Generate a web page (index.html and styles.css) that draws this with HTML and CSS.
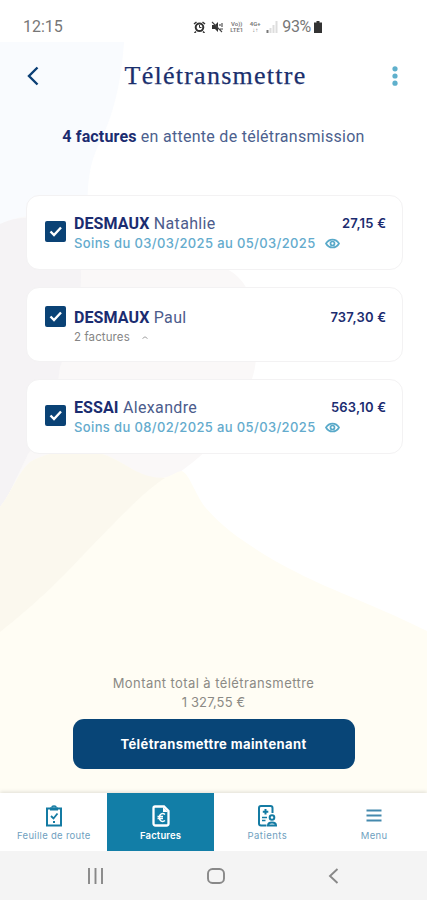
FILE: index.html
```
<!DOCTYPE html>
<html lang="fr">
<head>
  <meta charset="UTF-8" />
  <meta name="viewport" content="width=device-width, initial-scale=1.0"/>
  <title>Télétransmettre</title>
  <link rel="stylesheet" href="styles.css">
</head>
<body>
  <div class="screen">
    <svg class="backdrop" viewBox="0 0 427 751" preserveAspectRatio="none">
      <path d="M0 0H124C121 45 112 75 101 98C91 118 86 135 88 180L60 240H0Z" fill="#f9fbfe"/>
      <path d="M0 182C30 169 60 170 100 185L200 220C225 222 240 233 247 247C258 280 259 318 252 337C240 375 215 405 180 430L60 500H0Z" fill="#faf8f8"/>
      <path d="M0 182C30 169 60 175 80 215C85 260 70 300 60 325C55 365 45 390 28 412L0 470Z" fill="#f5f3f5"/>
      <path d="M0 751V465C12 450 18 430 30 420C50 407 90 405 110 415C130 424 140 436 160 436C170 436 174 430 182 429C190 433 194 450 205 465C225 488 245 500 265 513C320 546 365 558 427 589V751Z" fill="#fffdf4"/>
      <path d="M0 465C12 450 18 430 30 420C50 407 90 405 110 415C130 424 140 436 165 436C145 448 115 480 85 511C55 543 35 562 0 590Z" fill="#fbf8ee"/>
    </svg>

    <div class="status">
      <span class="time">12:15</span>
      <div class="status-icons">
        <svg width="13" height="12" viewBox="0 0 13 12">
          <path d="M1 3L3.500 1M12 3L9.500 1M3 10.500L1.500 12M10 10.500L11.500 12" stroke="#333" stroke-width="1.500"/>
          <circle cx="6.500" cy="6.300" r="3.800" fill="none" stroke="#333" stroke-width="2"/>
          <path d="M6.500 4V6.500H8.500" fill="none" stroke="#333"/>
        </svg>
        <svg width="13" height="12" viewBox="0 0 13 12">
          <path d="M1 4H4L7 1V11L4 8H1Z" fill="#333"/>
          <path d="M1 1L11 11M9 3V5M11 2V6M9 8H12" stroke="#444" stroke-width="1.100"/>
        </svg>
        <span class="net">Vo))<br>LTE1</span>
        <span class="net net-g">4G+<br>↓↑</span>
        <svg width="12" height="12" viewBox="0 0 12 12">
          <path d="M1.500 9V12" stroke="#777" stroke-width="2"/>
          <path d="M4.500 7V12M7.500 4V12M10.500 0V12" stroke="#ddd" stroke-width="2"/>
        </svg>
        <span class="percent">93%</span>
        <svg class="battery" width="8" height="12" viewBox="0 0 8 12">
          <path d="M2.500 0H5.500V1.500H8V12H0V1.500H2.500Z" fill="#333"/>
        </svg>
      </div>
    </div>

    <header class="header">
      <svg width="12" height="20" viewBox="0 0 12 20">
        <path d="M10.500 1.500L2 10L10.500 18.500" fill="none" stroke="#0b3f75" stroke-width="2.400"/>
      </svg>
      <h1>Télétransmettre</h1>
      <svg width="6" height="20" viewBox="0 0 6 20" fill="#5fb0cc">
        <circle cx="3" cy="2.800" r="2.600"/>
        <circle cx="3" cy="10" r="2.600"/>
        <circle cx="3" cy="17.200" r="2.600"/>
      </svg>
    </header>

    <p class="intro"><b>4 factures</b> en attente de télétransmission</p>

    <main class="list">
      <div class="card">
        <svg class="check" viewBox="0 0 21 21"><rect width="21" height="21" rx="2" fill="#0a4275"/><path d="M5.500 10.500L9 14L16 6.500" fill="none" stroke="#fff" stroke-width="2.400"/></svg>
        <div class="info">
          <div class="row"><span class="name"><b>DESMAUX</b> Natahlie</span><span class="price">27,15 €</span></div>
          <div class="care">Soins du 03/03/2025 au 05/03/2025
            <svg class="eye" viewBox="0 0 15 11"><path d="M1 5.500C4 .2 11 .2 14 5.500C11 10.800 4 10.800 1 5.500Z" fill="none" stroke="#58a9c9" stroke-width="1.700"/><circle cx="7.500" cy="5.500" r="2" fill="none" stroke="#58a9c9" stroke-width="1.700"/></svg>
          </div>
        </div>
      </div>

      <div class="card card-group">
        <svg class="check" viewBox="0 0 21 21"><rect width="21" height="21" rx="2" fill="#0a4275"/><path d="M5.500 10.500L9 14L16 6.500" fill="none" stroke="#fff" stroke-width="2.400"/></svg>
        <div class="info">
          <div class="row"><span class="name"><b>DESMAUX</b> Paul</span><span class="price">737,30 €</span></div>
          <div class="count">2 factures
            <svg width="6" height="3" viewBox="0 0 6 3"><path d="M.5 2.500L3 .8L5.500 2.500" fill="none" stroke="#999" stroke-width=".9"/></svg>
          </div>
        </div>
      </div>

      <div class="card">
        <svg class="check" viewBox="0 0 21 21"><rect width="21" height="21" rx="2" fill="#0a4275"/><path d="M5.500 10.500L9 14L16 6.500" fill="none" stroke="#fff" stroke-width="2.400"/></svg>
        <div class="info">
          <div class="row"><span class="name"><b>ESSAI</b> Alexandre</span><span class="price">563,10 €</span></div>
          <div class="care">Soins du 08/02/2025 au 05/03/2025
            <svg class="eye" viewBox="0 0 15 11"><path d="M1 5.500C4 .2 11 .2 14 5.500C11 10.800 4 10.800 1 5.500Z" fill="none" stroke="#58a9c9" stroke-width="1.700"/><circle cx="7.500" cy="5.500" r="2" fill="none" stroke="#58a9c9" stroke-width="1.700"/></svg>
          </div>
        </div>
      </div>
    </main>

    <div class="total">
      <p>Montant total à télétransmettre</p>
      <p class="amount">1 327,55 €</p>
      <button>Télétransmettre maintenant</button>
    </div>

    <nav class="tabs">
      <a class="tab">
        <svg width="18" height="22" viewBox="0 0 18 22" fill="none" stroke="#147ba3" stroke-width="2">
          <path d="M2 3.500H16V20.500H2Z"/>
          <path d="M5 2.500H13V5.500H5Z" fill="#147ba3" stroke="none"/>
          <path d="M7 2.500C7 .5 11 .5 11 2.500" stroke-width="1.500"/>
          <path d="M6 11L8.500 13.500L12.500 8.500" stroke-width="1.800"/>
          <path d="M8 17H10"/>
        </svg>
        <span>Feuille de route</span>
      </a>
      <a class="tab active">
        <svg width="18" height="22" viewBox="0 0 18 22" fill="none" stroke="#fff" stroke-width="2.300">
          <path d="M3 1.500H12L16.500 6V18.500Q16.500 20.500 14.500 20.500H3.500Q1.500 20.500 1.500 18.500V3Q1.500 1.500 3 1.500Z"/>
          <path d="M11 2V7H16Z" fill="#fff" stroke="none"/>
          <path d="M13 9.500C10.500 7.500 7.500 9 7.300 12.500C7.300 16 10.500 17.500 13 15.500M5.500 11.500H11M5.500 13.500H11" stroke-width="1.500"/>
        </svg>
        <span>Factures</span>
      </a>
      <a class="tab tab-patients">
        <svg width="19" height="22" viewBox="0 0 19 22" fill="none" stroke="#147ba3" stroke-width="2">
          <path d="M8.500 20.500H3Q1 20.500 1 18.500V3Q1 1 3 1H12.500Q14.500 1 14.500 3V8"/>
          <path d="M7.500 4V9.500M4.800 6.800H10.300" stroke-width="2"/>
          <path d="M4 12.500H9M4 15.500H7.500" stroke-width="1.300"/>
          <circle cx="14" cy="12.500" r="2.300"/>
          <path d="M10 20.500C10 16.500 18 16.500 18 20.500Z"/>
        </svg>
        <span>Patients</span>
      </a>
      <a class="tab">
        <svg width="16" height="22" viewBox="0 0 16 22">
          <path d="M.5 5.500H15.500M.5 10.500H15.500M.5 15.500H15.500" stroke="#4489ad" stroke-width="2"/>
        </svg>
        <span>Menu</span>
      </a>
    </nav>

    <div class="system">
      <svg width="17" height="16" viewBox="0 0 17 16"><path d="M2 0V16M8.500 0V16M15 0V16" stroke="#888" stroke-width="1.900"/></svg>
      <svg width="18" height="16" viewBox="0 0 18 16"><rect x="1" y="1" width="16" height="14" rx="4.500" fill="none" stroke="#888" stroke-width="1.900"/></svg>
      <svg width="11" height="16" viewBox="0 0 11 16"><path d="M9.500 1L2 8L9.500 15" fill="none" stroke="#888" stroke-width="1.900"/></svg>
    </div>
  </div>
</body>
</html>
```
FILE: styles.css
```
* { box-sizing: border-box; }

body {
  margin: 0;
  font-family: Roboto, sans-serif;
  background: #fff;
}

h1, p { margin: 0; }

svg {
  display: block;
  flex: none;
}

.screen {
  position: relative;
  display: flex;
  flex-direction: column;
  width: 427px;
  height: 900px;
  overflow: hidden;
  isolation: isolate;
  white-space: nowrap;
}

.backdrop {
  position: absolute;
  z-index: -1;
  top: 42px;
  left: 0;
  width: 427px;
  height: 751px;
}

.status {
  display: flex;
  align-items: center;
  height: 42px;
  padding: 11px 105px 0 23px;
  font-size: 16px;
  color: #777;
}

.status-icons {
  display: flex;
  align-items: center;
  gap: 5px;
  margin-left: auto;
}

.net {
  width: 15px;
  font-size: 6px;
  line-height: 6px;
  font-weight: 600;
  text-align: center;
}

.net-g { width: 12px; }

.percent {
  margin-left: -1px;
  letter-spacing: -0.3px;
}

.battery { margin-left: -2px; }

.header {
  display: flex;
  align-items: center;
  justify-content: space-between;
  height: 67px;
  padding: 0 29px 0 27px;
}

h1 {
  font-family: "Liberation Serif", serif;
  font-size: 26px;
  font-weight: 400;
  letter-spacing: 1.25px;
  color: #1b2f6d;
  -webkit-text-stroke: 0.25px #1b2f6d;
}

.intro {
  height: 86px;
  padding-top: 18px;
  font-size: 16px;
  line-height: 19px;
  letter-spacing: 0.28px;
  text-align: center;
  color: #4c5f8e;
}

.intro b, .name b {
  font-weight: 700;
  color: #1b2c70;
}

.intro b { letter-spacing: 0.15px; }

.list {
  display: flex;
  flex-direction: column;
  gap: 17px;
  padding: 0 24px 0 26px;
}

.card {
  display: flex;
  align-items: center;
  gap: 8px;
  height: 75px;
  padding: 0 16px 0 18px;
  background: #fff;
  border: 1px solid #f3f2f3;
  border-radius: 13px;
}

.check {
  width: 21px;
  height: 21px;
  margin-bottom: 2px;
}

.info {
  flex: 1;
  padding-top: 1px;
}

.row {
  display: flex;
  align-items: center;
  justify-content: space-between;
  height: 20px;
}

.name {
  font-size: 16px;
  letter-spacing: 0.35px;
  color: #4c5c8c;
}

.name b { letter-spacing: 0.1px; }

.price {
  font-family: Inter, sans-serif;
  font-size: 13px;
  font-weight: 600;
  letter-spacing: 0.2px;
  margin-right: -0.2px;
  color: #1b2c70;
}

.care, .count {
  display: flex;
  align-items: center;
  gap: 9px;
  height: 20px;
  font-family: Inter, sans-serif;
  font-size: 13px;
  font-weight: 500;
  letter-spacing: 0.37px;
  color: #64abcd;
}

.eye {
  width: 15px;
  height: 11px;
}

.card-group .check { margin-bottom: 17px; }

.card-group .info { padding-top: 5px; }

.count {
  gap: 12px;
  font-size: 11.5px;
  font-weight: 400;
  letter-spacing: 0.1px;
  color: #858585;
}

.total {
  display: flex;
  flex-direction: column;
  align-items: center;
  margin-top: auto;
  margin-bottom: 24px;
  font-family: Inter, sans-serif;
  font-size: 13px;
  line-height: 19px;
  letter-spacing: 0.42px;
  color: #8b8a85;
}

.amount { letter-spacing: 0.1px; }

.total button {
  width: 282px;
  height: 50px;
  margin-top: 7px;
  border: 0;
  border-radius: 11px;
  background: #084577;
  font-family: Inter, sans-serif;
  font-size: 13px;
  font-weight: 700;
  letter-spacing: 0.4px;
  color: #fff;
}

.tabs {
  display: grid;
  grid-template-columns: repeat(4, 1fr);
  height: 58px;
  background: #fff;
  box-shadow: 0 -1px 4px rgba(0, 0, 0, 0.13);
}

.tab {
  display: flex;
  flex-direction: column;
  align-items: center;
  gap: 2px;
  padding: 12px 0 0 1px;
  font-family: Inter, sans-serif;
  font-size: 9.5px;
  line-height: 13px;
  letter-spacing: 0.3px;
  color: #6f9fc0;
}

.tab.active {
  background: #127ea7;
  color: #fff;
  font-weight: 600;
  letter-spacing: 0.15px;
}

.tab-patients { letter-spacing: 0.5px; }

.system {
  display: flex;
  align-items: center;
  justify-content: space-between;
  height: 49px;
  padding: 0 88px 0 87px;
  background: #f4f4f4;
}
```
